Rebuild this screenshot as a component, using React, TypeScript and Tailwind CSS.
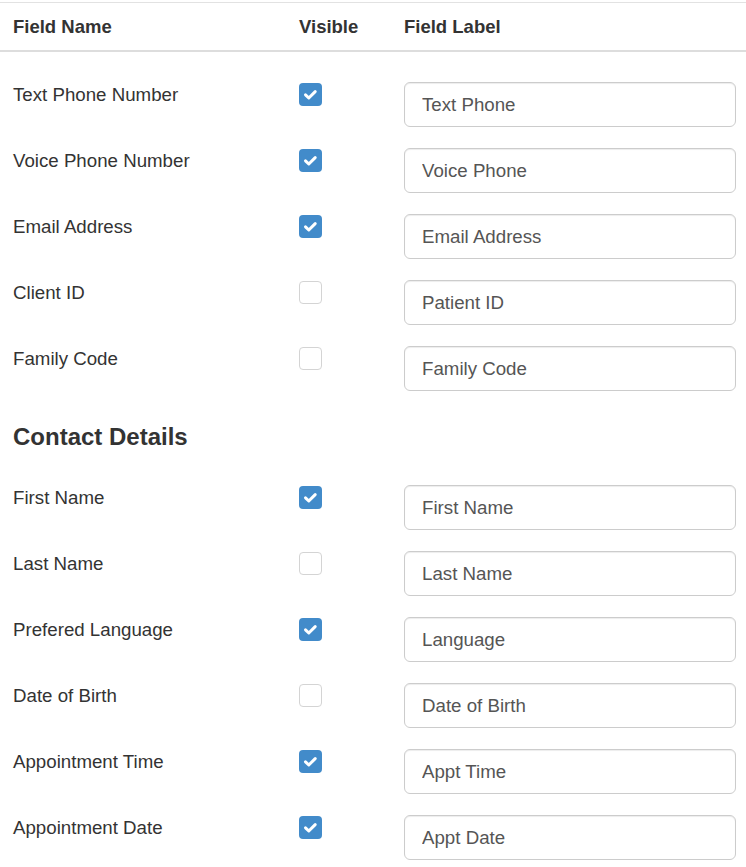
import React from "react";

type Field = { name: string; visible: boolean; label: string };

const channelFields: Field[] = [
  { name: "Text Phone Number", visible: true, label: "Text Phone" },
  { name: "Voice Phone Number", visible: true, label: "Voice Phone" },
  { name: "Email Address", visible: true, label: "Email Address" },
  { name: "Client ID", visible: false, label: "Patient ID" },
  { name: "Family Code", visible: false, label: "Family Code" },
];

const contactFields: Field[] = [
  { name: "First Name", visible: true, label: "First Name" },
  { name: "Last Name", visible: false, label: "Last Name" },
  { name: "Prefered Language", visible: true, label: "Language" },
  { name: "Date of Birth", visible: false, label: "Date of Birth" },
  { name: "Appointment Time", visible: true, label: "Appt Time" },
  { name: "Appointment Date", visible: true, label: "Appt Date" },
];

const CheckBox: React.FC<{ checked: boolean }> = ({ checked }) =>
  checked ? (
    <div className="w-[23px] h-[23px] rounded-[4px] bg-[#428bca] flex items-center justify-center">
      <svg width="23" height="23" viewBox="0 0 23 23">
        <path
          d="M6.5 11.8 L9.8 15 L16.2 8.6"
          fill="none"
          stroke="#fff"
          strokeWidth="3"
          strokeLinecap="round"
          strokeLinejoin="round"
        />
      </svg>
    </div>
  ) : (
    <div className="w-[23px] h-[23px] rounded-[4px] bg-white border border-[#d4d4d4]" />
  );

const FieldRow: React.FC<{ field: Field }> = ({ field }) => (
  <div className="flex flex-row items-start pl-[13px]">
    <div className="w-[286px] pt-[1px] text-[18.7px] leading-[24px] text-[#333]">
      {field.name}
    </div>
    <div className="w-[105px] pt-[1px]">
      <CheckBox checked={field.visible} />
    </div>
    <input
      type="text"
      defaultValue={field.label}
      className="w-[332px] h-[45px] px-[17px] rounded-[6px] border border-[#ccc] bg-white text-[18.7px] text-[#555] outline-none shadow-[inset_0_1px_1px_rgba(0,0,0,0.075)]"
    />
  </div>
);

export default function App() {
  return (
    <div
      className="w-[746px] min-h-[867px] bg-white flex flex-col"
      style={{ fontFamily: '"Liberation Sans", Arial, sans-serif' }}
    >
      <div className="mt-[2px] border-t border-[#e2e2e2] border-b-2 border-b-[#dddddd] h-[50px] flex flex-row items-center pl-[13px] text-[18.5px] font-bold text-[#333]">
        <div className="w-[286px]">Field Name</div>
        <div className="w-[105px]">Visible</div>
        <div>Field Label</div>
      </div>

      <div className="mt-[30px] flex flex-col gap-[21px]">
        {channelFields.map((f) => (
          <FieldRow key={f.name} field={f} />
        ))}
      </div>

      <h3 className="mt-[33px] mb-[35px] pl-[13px] h-[26px] text-[24px] leading-[26px] font-bold text-[#333]">
        Contact Details
      </h3>

      <div className="flex flex-col gap-[21px]">
        {contactFields.map((f) => (
          <FieldRow key={f.name} field={f} />
        ))}
      </div>
    </div>
  );
}
